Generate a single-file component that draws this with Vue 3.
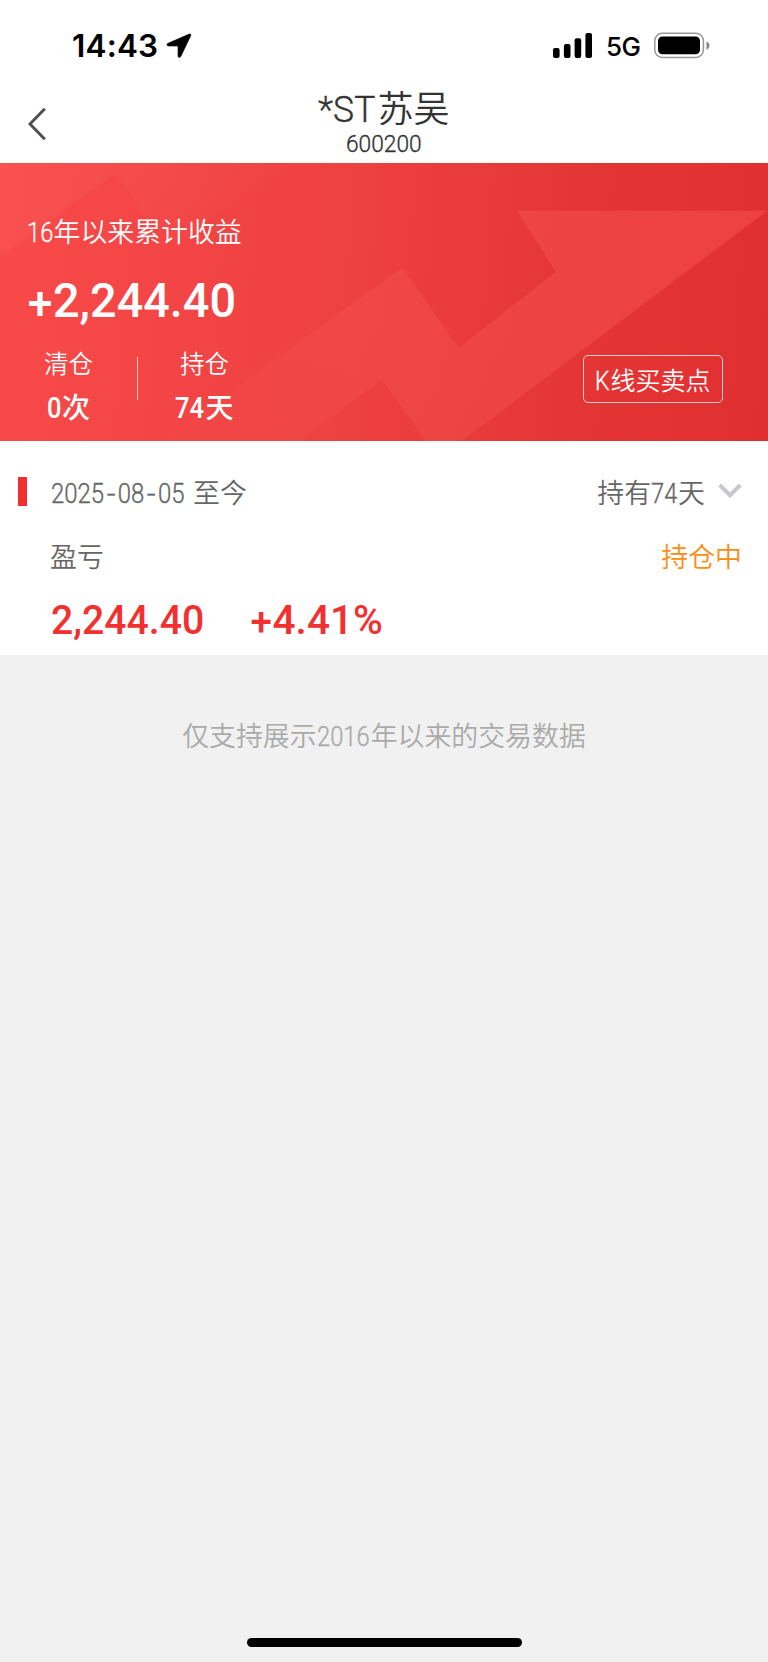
<script setup>
const stats = [
  { label: '清仓', number: '0', unit: '次', digits: 1 },
  { label: '持仓', number: '74', unit: '天', digits: 2 },
]
</script>

<template>
  <main class="screen">
    <header class="status">
      <div class="clock">
        <span class="time">14:43</span>
        <svg width="26" height="26" viewBox="0 0 26 26"><path d="M23.2 1.1 2 10.300C.3 11.100.8 13 2.400 13H12v9.900c0 1.800 2 2.200 2.800.6L24.700 2.800C25.300 1.400 24.400.6 23.200 1.100Z" stroke="#000" stroke-width=".6" /></svg>
      </div>
      <div class="radio">
        <svg class="signal" width="40" height="26" viewBox="0 0 40 26">
          <rect x="0" y="15" width="6.600" height="10" rx="2" />
          <rect x="10.900" y="11" width="6.600" height="14" rx="2" />
          <rect x="21.600" y="5.200" width="6.600" height="19.800" rx="2" />
          <rect x="32.400" y="0" width="6.600" height="25" rx="2" />
        </svg>
        <span class="network">5G</span>
        <svg width="58" height="27" viewBox="0 0 58 27">
          <rect x="1.800" y="1.300" width="48.600" height="24.200" rx="7.500" fill="none" stroke="#999" stroke-width="1.500" />
          <rect x="5" y="4.500" width="42" height="17.800" rx="4.500" />
          <path d="M53.500 9.500c4 1.800 4 6.500 0 8.300Z" fill="#888" />
        </svg>
      </div>
    </header>

    <nav class="nav">
      <svg class="back" width="20" height="34" viewBox="0 0 20 34"><path d="M16.800 1.800 2 17l14.800 15.200" fill="none" stroke="#505050" stroke-width="3" /></svg>
      <div class="heading">
        <h1 class="title"><span class="din title-latin">*ST</span>苏吴</h1>
        <div class="code"><span class="din code-num">600200</span></div>
      </div>
    </nav>

    <section class="banner">
      <svg class="art" width="768" height="278" viewBox="0 163.300 768 278" preserveAspectRatio="none">
        <defs>
          <linearGradient id="arrow" gradientUnits="userSpaceOnUse" x1="180" y1="440" x2="680" y2="211">
            <stop offset="0" stop-color="#ff6464" stop-opacity="0.030" />
            <stop offset="0.350" stop-color="#ff6464" stop-opacity="0.190" />
            <stop offset="1" stop-color="#ff5858" stop-opacity="0.420" />
          </linearGradient>
          <linearGradient id="ridge" gradientUnits="userSpaceOnUse" x1="80" y1="163" x2="150" y2="255">
            <stop offset="0" stop-color="#fff" stop-opacity="0.035" />
            <stop offset="1" stop-color="#fff" stop-opacity="0.012" />
          </linearGradient>
        </defs>
        <path d="M0 163H288L170 250 115 174 0 257Z" fill="url(#ridge)" />
        <path d="M160 442 402 268 459 348 556 272 517 211H767L461 442H426L382 380 298 442Z" fill="url(#arrow)" />
      </svg>
      <div class="summary">
        <div class="caption"><span class="din caption-num">16</span>年以来累计收益</div>
        <div class="total"><span class="din total-num"><span class="plus">+</span>2,244.40</span></div>
        <div class="stats">
          <div v-for="s in stats" :key="s.label" class="stat">
            <div class="stat-label">{{ s.label }}</div>
            <div class="stat-value"><span class="din" :class="s.digits === 1 ? 'one' : 'two'">{{ s.number }}</span>{{ s.unit }}</div>
          </div>
        </div>
      </div>
      <button class="kline"><span class="din kline-latin">K</span>线买卖点</button>
    </section>

    <section class="record">
      <div class="row period">
        <span class="marker"></span>
        <span class="dates"><span class="din date-num">2025<i>-</i>08<i>-</i>05</span>至今</span>
        <span class="held">持有<span class="din held-num">74</span>天</span>
        <svg class="chevron" width="24" height="16" viewBox="0 0 24 16"><path d="M1.700 2 12 12.200 22.300 2" fill="none" stroke="#c8c7d0" stroke-width="4" /></svg>
      </div>
      <div class="row result">
        <span>盈亏</span>
        <span class="holding">持仓中</span>
      </div>
      <div class="row amounts">
        <span class="din amount">2,244.40</span>
        <span class="din percent"><span class="plus">+</span>4.41%</span>
      </div>
    </section>

    <p class="notice">仅支持展示<span class="din notice-num">2016</span>年以来的交易数据</p>
    <div class="home"></div>
  </main>
</template>

<style>
body { background: #f1f1f1; }
</style>

<style scoped>
.screen {
  box-sizing: border-box;
  width: 768px;
  height: 1662px;
  display: flex;
  flex-direction: column;
  overflow: hidden;
  background: #f1f1f1;
  color: #666;
  font-family: Roboto, "Noto Sans CJK SC", sans-serif;
  font-size: 26.900px;
  font-weight: 350;
  white-space: nowrap;
}
svg { display: block; flex: none; }
.din {
  display: inline-block;
  white-space: pre;
  font-weight: 300;
  -webkit-text-stroke: 0.350px currentColor;
  text-align: left;
  transform-origin: 0 50%;
  transform: scaleX(0.880);
}
.status {
  flex: none;
  height: 86px;
  box-sizing: border-box;
  padding: 0 57px 0 72px;
  display: flex;
  justify-content: space-between;
  background: #fff;
  color: #000;
  font-family: Inter, sans-serif;
}
.clock, .radio { display: flex; align-items: flex-start; }
.clock svg { margin-top: 33px; }
.time { width: 94px; margin-top: 27px; line-height: 38px; font-size: 31.500px; font-weight: 600; letter-spacing: 0.200px; }
.signal { margin: 33px 13px 0 -1px; }
.network { width: 47px; margin-top: 31px; line-height: 32px; font-size: 26px; font-weight: 500; letter-spacing: -0.500px; }
.radio svg:last-child { margin-top: 32px; }
.nav {
  flex: none;
  height: 77px;
  display: grid;
  grid-template-columns: 100px 1fr 100px;
  background: #fff;
  color: #333;
}
.back { margin: 21px 0 0 28px; }
.heading { display: flex; flex-direction: column; align-items: center; }
.title { margin: 1px 0 0; height: 45px; line-height: 45px; font-size: 36px; font-weight: 350; }
.title-latin { width: 59px; font-size: 37px; transform: scaleX(0.960); }
.code { margin-top: -3px; height: 30px; line-height: 30px; font-size: 24.600px; }
.code-num { width: 76px; transform: scaleX(0.925); }
.banner {
  position: relative;
  flex: none;
  height: 278.400px;
  box-sizing: border-box;
  padding: 54px 45.500px 0 27px;
  display: flex;
  justify-content: space-between;
  background: linear-gradient(94deg, #f94a4a, #ed4040 46%, #e43535 77%, #e02f30);
  color: #fff;
}
.art { position: absolute; left: 0; top: 0; }
.summary, .kline { position: relative; }
.caption { height: 32px; line-height: 32px; }
.caption-num { width: 26.500px; }
.total { height: 56px; margin-top: 24px; line-height: 56px; font-size: 49px; }
.plus { display: inline-block; transform: translateY(0.050em) scale(0.950); }
.total-num { font-weight: 500; transform: scaleX(0.955); -webkit-text-stroke: 0; }
.stats { display: flex; margin-top: 21px; }
.stat { text-align: center; }
.stat + .stat { width: 137px; }
.stat:first-child { width: 83px; padding-right: 26px; position: relative; }
.stat:first-child::after { content: ""; position: absolute; right: -2px; top: 7px; width: 1.500px; height: 43px; background: rgba(255, 255, 255, 0.750); }
.stat-label { height: 30px; line-height: 30px; font-size: 24.500px; }
.stat-value { height: 40px; margin-top: 8px; line-height: 40px; font-size: 28px; font-weight: 500; }
.stat-value .din { font-size: 29px; font-weight: 500; -webkit-text-stroke: 0; }
.one { width: 15px; }
.two { width: 30px; }
.kline {
  width: 140px;
  height: 48px;
  margin: 137.500px 0 0;
  padding: 4px 0 0 1px;
  border: 1.500px solid rgba(255, 255, 255, 0.750);
  border-radius: 5px;
  background: transparent;
  color: #fff;
  font: inherit;
  font-size: 25px;
  line-height: 42px;
}
.kline-latin { width: 15px; font-size: 26px; }
.record { flex: none; height: 213.300px; background: #fff; }
.row { display: flex; align-items: center; }
.period { height: 62px; padding: 19px 26px 0 18px; }
.marker { width: 9px; height: 29px; margin: 0 24px 0 0; background: #f23030; }
.date-num { width: 142px; transform: scaleX(0.890); }
.date-num i { display: inline-block; width: 15.300px; font-style: normal; text-align: center; transform: scaleX(1.300); }
.held { margin-left: auto; }
.held-num { width: 27px; }
.chevron { margin-left: 13px; }
.result { height: 40px; padding: 13px 26px 0 50px; justify-content: space-between; }
.holding { color: #ff8c12; }
.amounts { height: 56px; padding: 17px 0 0 51px; color: #f23030; font-size: 41px; line-height: 50px; }
.amounts .din { font-weight: 500; transform: scaleX(0.955); -webkit-text-stroke: 0; }
.amount { width: 199px; }
.amounts .percent { transform: scaleX(0.990); }
.notice { margin: 65px 0 0; line-height: 34px; text-align: center; color: #aaa; }
.notice-num { width: 54px; }
.home { width: 275px; height: 9px; margin: auto auto 15px; border-radius: 5px; background: #000; flex: none; }
</style>
